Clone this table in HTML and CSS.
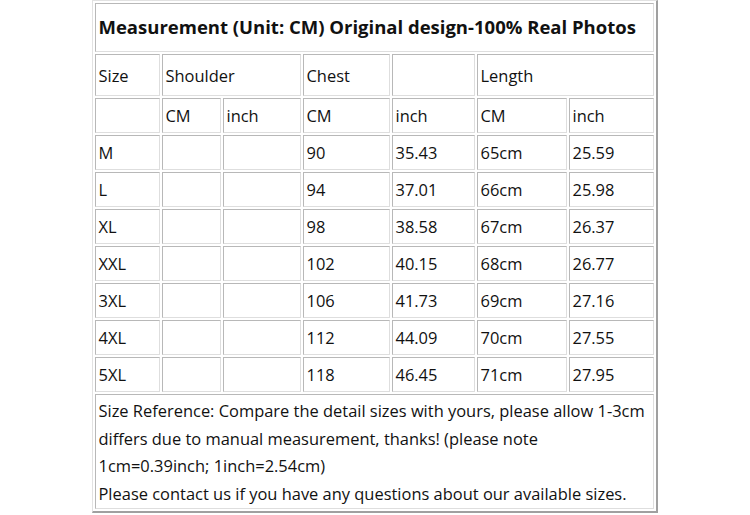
FILE: index.html
```html
<!DOCTYPE html>
<html>
<head>
<meta charset="utf-8">
<link rel="stylesheet" href="styles.css">
</head>
<body>
<table class="size-table">
  <colgroup>
    <col class="c1"><col class="c2"><col class="c3"><col class="c4"><col class="c5"><col class="c6"><col class="c7">
  </colgroup>
  <tr class="r-title"><td colspan="7" class="title">Measurement (Unit: CM) Original design-100% Real Photos</td></tr>
  <tr class="r-head"><td>Size</td><td colspan="2">Shoulder</td><td>Chest</td><td></td><td colspan="2">Length</td></tr>
  <tr class="r-sub"><td></td><td>CM</td><td>inch</td><td>CM</td><td>inch</td><td>CM</td><td>inch</td></tr>
  <tr class="r-data"><td>M</td><td></td><td></td><td>90</td><td>35.43</td><td>65cm</td><td>25.59</td></tr>
  <tr class="r-data"><td>L</td><td></td><td></td><td>94</td><td>37.01</td><td>66cm</td><td>25.98</td></tr>
  <tr class="r-data"><td>XL</td><td></td><td></td><td>98</td><td>38.58</td><td>67cm</td><td>26.37</td></tr>
  <tr class="r-data"><td>XXL</td><td></td><td></td><td>102</td><td>40.15</td><td>68cm</td><td>26.77</td></tr>
  <tr class="r-data"><td>3XL</td><td></td><td></td><td>106</td><td>41.73</td><td>69cm</td><td>27.16</td></tr>
  <tr class="r-data"><td>4XL</td><td></td><td></td><td>112</td><td>44.09</td><td>70cm</td><td>27.55</td></tr>
  <tr class="r-data"><td>5XL</td><td></td><td></td><td>118</td><td>46.45</td><td>71cm</td><td>27.95</td></tr>
  <tr class="r-foot"><td colspan="7" class="note">Size Reference: Compare the detail sizes with yours, please allow 1-3cm<br>differs due to manual measurement, thanks! (please note<br>1cm=0.39inch; 1inch=2.54cm)<br>Please contact us if you have any questions about our available sizes.</td></tr>
</table>
</body>
</html>
```

FILE: styles.css
```css
html, body {
  margin: 0;
  padding: 0;
  background: #ffffff;
}

body {
  font-family: "Open Sans", "Noto Sans", sans-serif;
  color: #111111;
}

.size-table {
  margin: 0 auto;
  table-layout: fixed;
  width: 565px;
  border-collapse: separate;
  border-spacing: 2px;
  border-top: 1px solid #e2e2e2;
  border-left: 1px solid #e2e2e2;
  border-right: 2px solid #a0a0a0;
  border-bottom: 2px solid #a0a0a0;
  font-size: 16.45px;
}

.c1 { width: 65px; }
.c2 { width: 59px; }
.c3 { width: 78px; }
.c4 { width: 87px; }
.c5 { width: 83px; }
.c6 { width: 90px; }
.c7 { width: 84px; }

.size-table td {
  box-sizing: border-box;
  padding: 0 0 0 2px;
  border-top: 1px solid #b8b8b8;
  border-left: 1px solid #b8b8b8;
  border-right: 1px solid #dedede;
  border-bottom: 1px solid #dedede;
  vertical-align: middle;
  white-space: nowrap;
  overflow: hidden;
}

.r-title td { height: 49px; }
.r-head td { height: 42px; }
.r-sub td { height: 35px; }
.r-data td { height: 35px; }
.r-foot td { height: 115px; }

.size-table td.title {
  font-weight: bold;
  font-size: 18.5px;
  padding-bottom: 2px;
}

.size-table td.note {
  line-height: 27.5px;
  padding-top: 1px;
}
```
